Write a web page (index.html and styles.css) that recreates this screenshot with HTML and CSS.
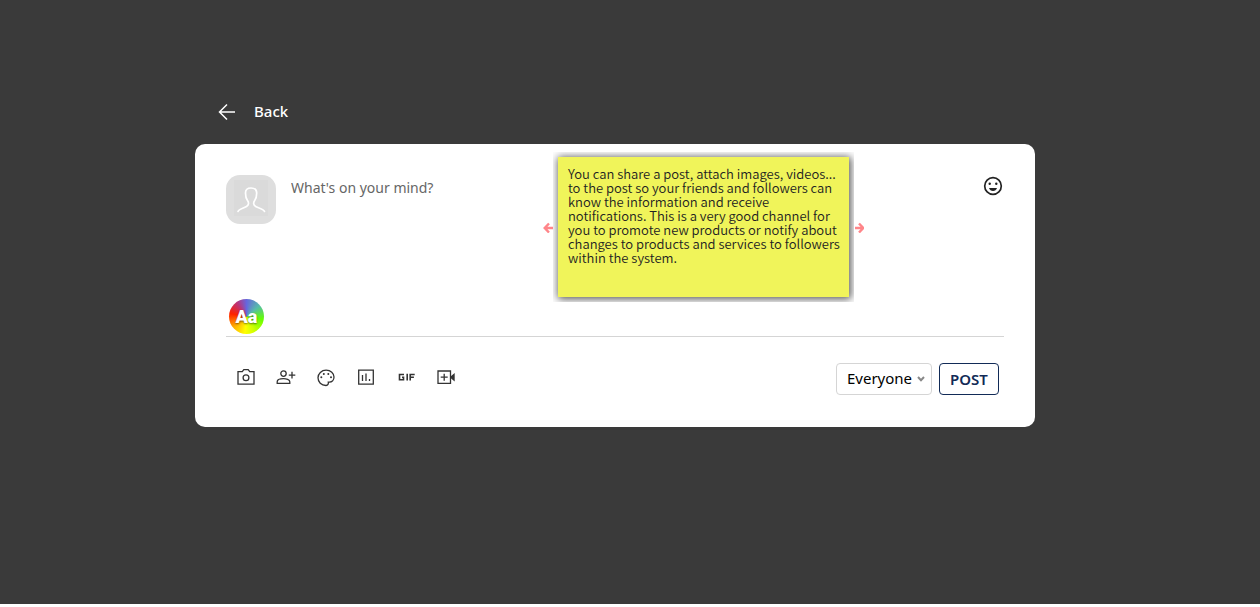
FILE: index.html
```html
<!DOCTYPE html>
<html lang="en">
<head>
<meta charset="utf-8">
<title>Create post</title>
<link rel="stylesheet" href="styles.css">
</head>
<body>
<main class="overlay">
  <div class="dialog">
    <a class="back" href="#">
      <svg width="18" height="18" viewBox="0 0 18 18" fill="none" stroke="currentColor" stroke-width="1.5"><path d="M17 9H2M9 1.500 1.500 9 9 16.500"/></svg>
      <span>Back</span>
    </a>
    <form class="card">
      <div class="composer">
        <svg class="avatar" viewBox="0 0 50 49" role="img" aria-label="Profile picture">
          <rect width="50" height="49" rx="14" fill="#dedede"/>
          <rect x="8" y="5" width="34" height="36" fill="#dadada"/>
          <path d="M12 36.500C12.500 34 17 33.500 20.500 31.500C23 30 23 27.500 21.500 25.500C20 23.500 19.500 21 19.500 18C19.500 14.500 21.500 13 25 13S30.700 14.500 30.700 18C30.700 21 30.200 23.500 28.700 25.500C27.200 27.500 27.200 30 29.700 31.500C33.200 33.500 38 34 38.500 36.500" fill="none" stroke="#fff" stroke-width="1.700" stroke-linecap="round"/>
        </svg>
        <textarea class="message" aria-label="Post text" placeholder="What's on your mind?"></textarea>
        <button class="icon-button" type="button" aria-label="Emoji">
          <svg width="20" height="20" viewBox="0 0 20 20"><circle cx="10" cy="10" r="8.300" fill="none" stroke="#222" stroke-width="1.700"/><circle cx="6.700" cy="7.700" r="1.200" fill="#222"/><circle cx="13.300" cy="7.700" r="1.200" fill="#222"/><path d="M6 12h8c-.7 1.900-2 3-4 3s-3.300-1.100-4-3z" fill="#222"/></svg>
        </button>
      </div>
      <div class="style-row"><button class="text-style" type="button" aria-label="Text background">Aa</button></div>
      <div class="toolbar">
        <div class="tools">
          <button class="icon-button" type="button" aria-label="Photo"><svg width="20" height="20" viewBox="0 0 20 20" class="line"><path d="M2 4.700h4.300l1.500-2h4.400l1.500 2H18v12.500H2z"/><circle cx="10" cy="10.700" r="2.900"/></svg></button>
          <button class="icon-button" type="button" aria-label="Tag people"><svg width="20" height="20" viewBox="0 0 20 20" class="line"><circle cx="7.500" cy="6.600" r="2.700"/><path d="M1.200 16.300v-1.600c0-2.200 3.600-3.100 6.300-3.100s6.300.9 6.300 3.100v1.600zM16 4.800v6.800M12.800 8.200h6.500"/></svg></button>
          <button class="icon-button" type="button" aria-label="Feeling"><svg width="20" height="20" viewBox="0 0 20 20" class="line"><path d="M10 18.500C5.300 18.500 2 15 2 10.800S5.500 3.200 10.100 3.200s7.900 3.100 7.900 6.900c0 3-2.100 5-4.600 5h-1.100c.3 1.600-.3 3.400-2.300 3.400z"/><g fill="#333" stroke="none"><circle cx="5.300" cy="10.300" r="1"/><circle cx="7.800" cy="6.900" r="1"/><circle cx="12.300" cy="6.900" r="1"/><circle cx="15" cy="10.300" r="1"/></g></svg></button>
          <button class="icon-button" type="button" aria-label="Poll"><svg width="20" height="20" viewBox="0 0 20 20" class="line"><path d="M2.700 3.200h14.600v13.900H2.700zM6.500 8v6M10 6.500V14M13.500 12V14"/></svg></button>
          <button class="icon-button" type="button" aria-label="GIF"><svg width="20" height="20" viewBox="0 0 20 20" class="line gif"><path d="M8 7.500H3.500v5.200h4v-2.500H6M11.200 6.800v6.600M14.200 13.400V7.500h4.500M14.200 10.300h3.700"/></svg></button>
          <button class="icon-button" type="button" aria-label="Video"><svg width="20" height="20" viewBox="0 0 20 20" class="line"><path d="M2 4h12.500v12.300H2zM8.200 6.700v7M4.700 10.200h7"/><path d="M14.500 9.500 18.700 6v8.500l-4.200-3.500z" fill="#333" stroke="none"/></svg></button>
        </div>
        <div class="actions">
          <div class="audience">
            <select aria-label="Audience"><option>Everyone</option></select>
            <svg width="8" height="6" viewBox="0 0 8 6" fill="none" stroke="#888" stroke-width="2"><path d="M1 1l3 3.200L7 1"/></svg>
          </div>
          <button class="post" type="submit">POST</button>
        </div>
      </div>
      <aside class="tip">
        <svg width="10" height="12" viewBox="0 0 10 12" class="pointer"><path d="M10 7H2M6 2.500 1.700 7 6 11.500"/></svg>
        <div class="note-frame"><p class="note">You can share a post, attach images, videos... to the post so your friends and followers can know the information and receive notifications. This is a very good channel for you to promote new products or notify about changes to products and services to followers within the system.</p></div>
        <svg width="10" height="12" viewBox="0 0 10 12" class="pointer"><path d="M1 7h8M5 2.500 9.300 7 5 11.500"/></svg>
      </aside>
    </form>
  </div>
</main>
</body>
</html>
```
FILE: styles.css
```css
* { box-sizing: border-box; }
body {
  margin: 0;
  background: #fff;
  font-family: "Noto Sans", sans-serif;
  font-size: 15px;
}
button, select, textarea { font: inherit; }
svg { display: block; }
.overlay {
  min-height: calc(100vh - 3px);
  padding: 100px 30px 24px 0;
  background: #3a3a3a;
}
.dialog {
  max-width: 840px;
  margin: 0 auto;
}
.back {
  display: inline-flex;
  align-items: center;
  gap: 18px;
  height: 24px;
  margin: 0 0 20px 23px;
  vertical-align: top;
  color: #fff;
  font-weight: 500;
  text-decoration: none;
}
.back span { padding-bottom: 2px; }
.card {
  position: relative;
  padding: 31px 31px 32px;
  border-radius: 10px;
  background: #fff;
}
.composer {
  display: flex;
  align-items: flex-start;
  gap: 15px;
}
.avatar {
  width: 50px;
  height: 49px;
  flex: none;
}
.message {
  flex: 1;
  height: 123px;
  padding: 3px 0;
  border: 0;
  outline: 0;
  resize: none;
  background: none;
  font-size: 14px;
  line-height: 20px;
}
.message::placeholder { color: #666; }
.icon-button {
  display: grid;
  place-items: center;
  padding: 1px;
  border: 0;
  background: none;
}
.style-row {
  padding: 1px 3px 2px;
  border-bottom: 1px solid #d5d5d5;
}
.text-style {
  display: block;
  width: 35px;
  height: 35px;
  padding: 0;
  border: 0;
  border-radius: 50%;
  background: conic-gradient(#6666dd, #55bbaa 50deg, #66ff00 100deg, #ccff00 150deg, #ffff00 185deg, #ffb000 230deg, #ff2200 280deg, #bb3377 325deg, #6666dd);
  color: #fff;
  font-family: Roboto, sans-serif;
  font-size: 18px;
  font-weight: 900;
  text-shadow: 0 1px 2px rgba(0, 0, 0, .5);
}
.toolbar {
  display: flex;
  justify-content: space-between;
  padding: 26px 5px 0 9px;
}
.tools {
  display: flex;
  align-items: flex-start;
  gap: 18px;
  padding-top: 3px;
}
.line {
  fill: none;
  stroke: #333;
  stroke-width: 1.3;
}
.gif { stroke-width: 1.6; }
.actions {
  display: flex;
  gap: 7px;
}
.audience {
  display: flex;
  align-items: center;
  position: relative;
}
.audience select {
  appearance: none;
  width: 96px;
  height: 32px;
  padding: 0 10px 2px;
  border: 1px solid #d5d5d5;
  border-radius: 4px;
  background: #fff;
  color: #000;
}
.audience svg {
  position: absolute;
  right: 7px;
  pointer-events: none;
}
.post {
  width: 60px;
  height: 32px;
  padding: 0;
  border: 1px solid #122b57;
  border-radius: 4px;
  background: #fff;
  color: #122b57;
  font-weight: 600;
}
.tip {
  position: absolute;
  top: 8px;
  left: 348px;
  display: flex;
  align-items: center;
}
.note-frame {
  overflow: hidden;
  padding: 5px;
}
.note {
  width: 291px;
  min-height: 140px;
  margin: 0;
  padding: 10px 6px 10px 10px;
  background: #f0f45a;
  box-shadow: 1px 1px 8px 1px #555;
  color: #222;
  font-family: "Noto Sans CJK SC", sans-serif;
  font-size: 13px;
  font-weight: 350;
  line-height: 14px;
}
.pointer {
  fill: none;
  stroke: #ff8589;
  stroke-width: 2.4;
}
```
